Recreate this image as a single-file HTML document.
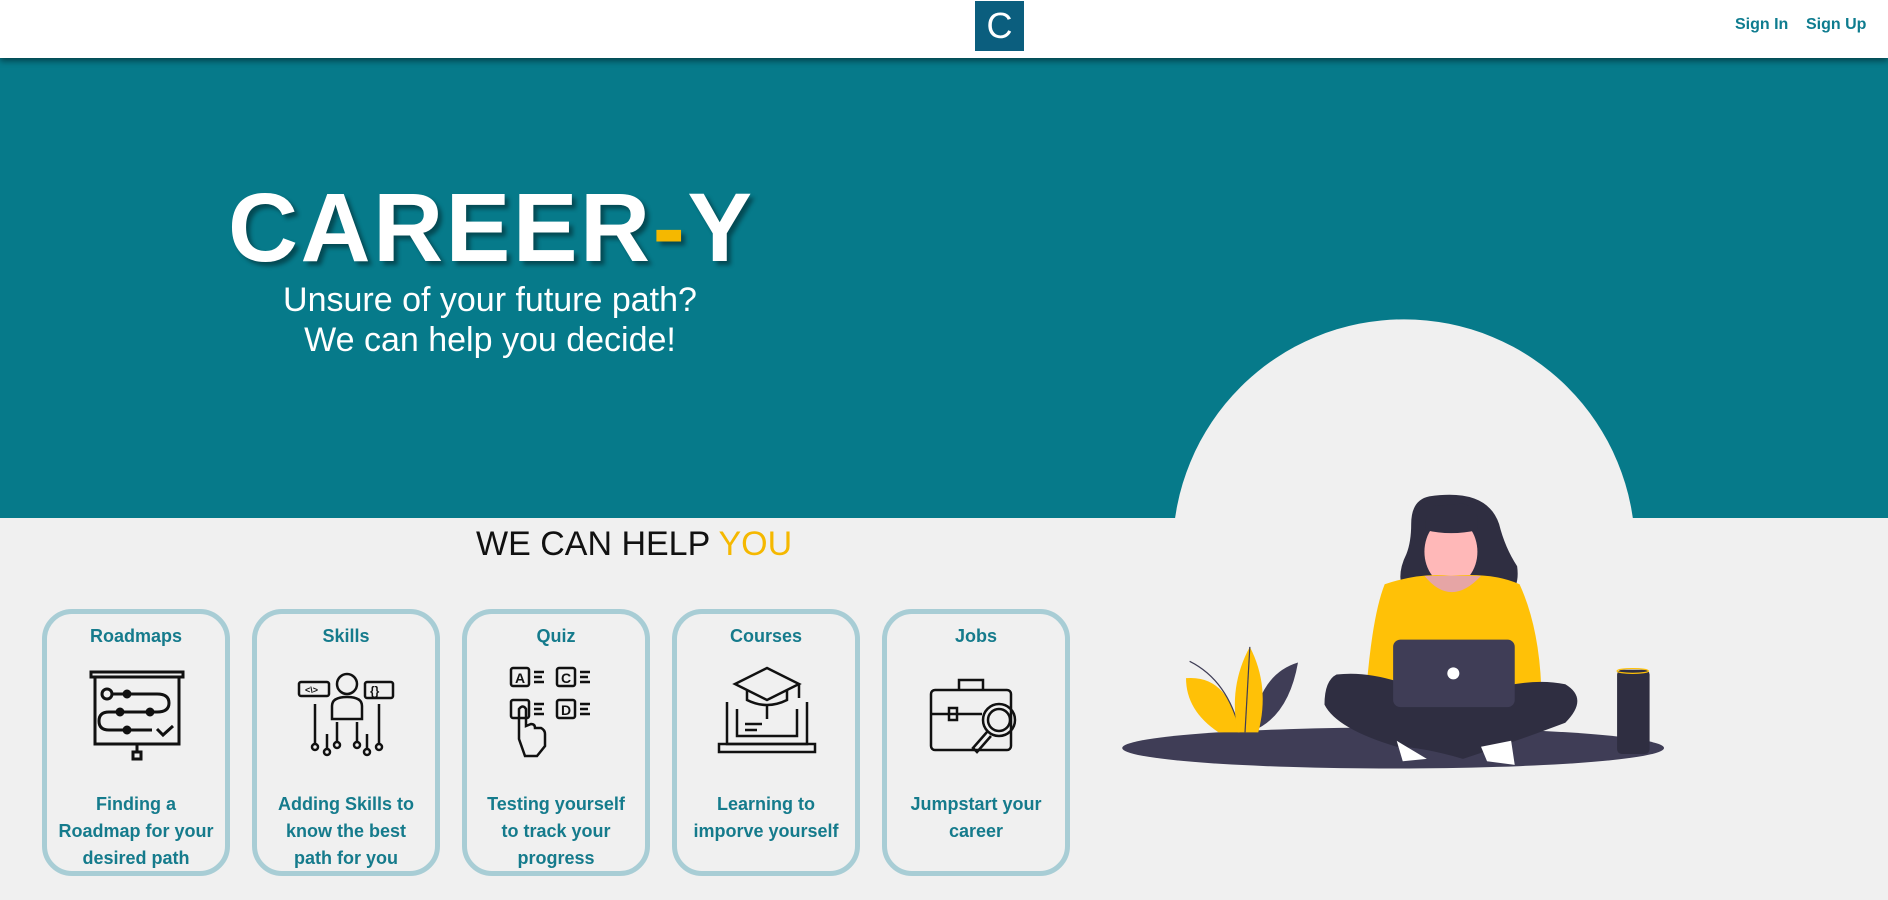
<!DOCTYPE html>
<html><head><meta charset="utf-8"><style>
*{margin:0;padding:0;box-sizing:border-box}
body{width:1888px;height:900px;overflow:hidden;background:#f0f0f0;font-family:"Liberation Sans",Arial,sans-serif;position:relative}
.hdr{position:absolute;left:0;top:0;width:1888px;height:58px;background:#fff;box-shadow:0 3px 6px rgba(0,0,0,.45);z-index:3}
.logo{position:absolute;left:975px;top:1px;width:49px;height:50px;background:#0b5e7e;color:#fff;font-size:36px;text-align:center;line-height:50px;font-weight:normal}
.nav{position:absolute;top:16px;font-size:16px;font-weight:bold;color:#0e7c8f}
.hero{position:absolute;left:0;top:58px;width:1888px;height:460px;background:#067a8a}
.title{position:absolute;left:228px;top:172px;font-size:97px;font-weight:bold;color:#fff;letter-spacing:2.5px;text-shadow:4px 4px 4px rgba(0,0,0,.4);z-index:2}
.sub{position:absolute;left:240px;width:500px;top:280px;text-align:center;color:#fff;font-size:34px;line-height:40px;z-index:2}
.help{position:absolute;left:476px;top:525px;font-size:34px;color:#111;z-index:2}
.card{position:absolute;top:609px;width:188px;height:267px;border:5px solid #a8cdd5;border-radius:30px;text-align:center;color:#157b8c;font-weight:bold;z-index:2}
.card .t{margin-top:12px;font-size:18px}
.card svg{position:absolute;left:40px;top:50px}
.card .d{position:absolute;left:0;right:0;top:177px;font-size:18px;line-height:27px}
</style></head><body>
<div class="hdr"><div class="logo">C</div><div class="nav" style="left:1735px">Sign In</div><div class="nav" style="left:1806px">Sign Up</div></div>
<div class="hero"></div>
<div class="title">CAREER<span style="color:#f5b800">-</span>Y</div>
<div class="sub">Unsure of your future path?<br>We can help you decide!</div>
<div class="help">WE CAN HELP <span style="color:#f5b800">YOU</span></div>

<svg style="position:absolute;left:0;top:0;z-index:1" width="1888" height="900" viewBox="0 0 1568 747">
<circle cx="1166" cy="457" r="192" fill="#f0f0f0"/>
<ellipse cx="1157" cy="621" rx="225" ry="17" fill="#3f3d56"/>
<path d="M985 563 Q1020 560 1030 608 L1012 608 Q985 590 985 563Z" fill="#ffc107"/>
<path d="M988 549 Q1020 565 1030 608" stroke="#3f3d56" fill="none"/>
<path d="M1078 550 Q1045 560 1040 607 Q1070 595 1078 550Z" fill="#3f3d56"/>
<path d="M1038 537 Q1055 570 1045 608 L1028 608 Q1020 570 1038 537Z" fill="#ffc107"/>
<line x1="1038" y1="537" x2="1034" y2="608" stroke="#3f3d56"/>
<path d="M1187 412 Q1235 405 1245 435 Q1250 455 1260 470 Q1262 485 1255 492 L1168 495 Q1158 480 1168 460 Q1172 450 1172 435 Q1172 415 1187 412Z" fill="#2f2e41"/>
<ellipse cx="1205" cy="458" rx="22" ry="28" fill="#ffb8b8"/>
<path d="M1184 440 Q1205 445 1227 440 Q1230 422 1215 418 L1190 420 Q1182 428 1184 440Z" fill="#2f2e41"/>
<path d="M1150 485 Q1180 475 1205 478 Q1240 475 1262 485 Q1278 520 1280 570 L1260 572 L1250 560 L1160 560 L1150 575 L1135 570 Q1140 510 1150 485Z" fill="#ffc107"/>
<path d="M1183 478 Q1205 505 1230 478Z" fill="#e6a5a5"/>
<path d="M1110 560 Q1150 555 1205 585 Q1260 560 1300 568 Q1320 580 1300 600 Q1260 615 1230 625 L1215 630 Q1180 620 1160 620 Q1110 605 1100 585 Q1100 565 1110 560Z" fill="#2f2e41"/>
<path d="M1160 615 L1165 632 L1185 630 Z" fill="#fff"/><path d="M1230 620 L1255 615 L1258 635 L1235 632Z" fill="#fff"/>
<rect x="1157" y="531" width="101" height="56" rx="6" fill="#3f3d56"/>
<circle cx="1207" cy="559" r="5" fill="#fff"/>
<rect x="1343" y="556" width="27" height="70" rx="4" fill="#2f2e41"/>
<ellipse cx="1356" cy="557" rx="13" ry="2" fill="none" stroke="#ffc107"/>
</svg>

<div class="card" style="left:42px"><div class="t">Roadmaps</div>
<svg width="100" height="100" viewBox="0 0 100 100" fill="none" stroke="#111" stroke-width="3"><rect x="4" y="8" width="92" height="5"/><path d="M8 13V80H92V13M50 80V88"/><rect x="46" y="88" width="8" height="7"/><circle cx="20" cy="30" r="5"/><path d="M25 30H70Q82 30 82 39Q82 48 70 48H22Q12 48 12 57Q12 66 22 66H65"/><circle cx="40" cy="30" r="3"/><circle cx="33" cy="48" r="3"/><circle cx="63" cy="48" r="3"/><circle cx="40" cy="66" r="3"/><path d="M70 65L76 71L86 62"/></svg>
<div class="d">Finding a<br>Roadmap for your<br>desired path</div></div>

<div class="card" style="left:252px"><div class="t">Skills</div>
<svg width="100" height="100" viewBox="0 0 100 100" fill="none" stroke="#111" stroke-width="2.5"><rect x="2" y="18" width="30" height="14" rx="2"/><rect x="68" y="18" width="28" height="16" rx="2"/><circle cx="50" cy="20" r="10"/><path d="M35 55V42Q35 33 50 33Q65 33 65 42V55Z"/><path d="M18 40V80M82 40V80M40 58V78M60 58V78M30 70V85M70 70V85"/><circle cx="18" cy="83" r="3"/><circle cx="30" cy="88" r="3"/><circle cx="40" cy="81" r="3"/><circle cx="60" cy="81" r="3"/><circle cx="70" cy="88" r="3"/><circle cx="82" cy="83" r="3"/><text x="8" y="29" font-size="9" fill="#111" stroke="none">&lt;\&gt;</text><text x="73" y="31" font-size="12" fill="#111" stroke="none">{}</text></svg>
<div class="d">Adding Skills to<br>know the best<br>path for you</div></div>

<div class="card" style="left:462px"><div class="t">Quiz</div>
<svg width="100" height="100" viewBox="0 0 100 100" fill="none" stroke="#111" stroke-width="2.5"><rect x="4" y="4" width="18" height="18" rx="2"/><rect x="50" y="4" width="18" height="18" rx="2"/><rect x="4" y="36" width="18" height="18" rx="2"/><rect x="50" y="36" width="18" height="18" rx="2"/><path d="M27 8H37M27 13H35M27 18H37M73 8H83M73 13H81M73 18H83M27 40H37M27 45H35M27 50H37M73 40H83M73 45H81M73 50H83"/><text x="8" y="19" font-size="14" fill="#111" stroke="none">A</text><text x="54" y="19" font-size="14" fill="#111" stroke="none">C</text><text x="54" y="51" font-size="14" fill="#111" stroke="none">D</text><path d="M12 75V45Q16 40 19 45V62L24 60Q28 60 28 64L34 64Q38 66 38 70V82L30 92H18Z"/></svg>
<div class="d">Testing yourself<br>to track your<br>progress</div></div>

<div class="card" style="left:672px"><div class="t">Courses</div>
<svg width="100" height="100" viewBox="0 0 100 100" fill="none" stroke="#111" stroke-width="2.5"><path d="M10 38V80H90V38"/><path d="M2 80H98V88H2Z"/><path d="M20 45V72H80V45"/><path d="M50 4L82 20L50 36L18 20Z"/><path d="M30 26V36Q50 46 70 36V26"/><path d="M82 20V34"/><path d="M50 40V55"/><path d="M28 60H45M28 66H40"/></svg>
<div class="d">Learning to<br>imporve yourself</div></div>

<div class="card" style="left:882px"><div class="t">Jobs</div>
<svg width="100" height="100" viewBox="0 0 100 100" fill="none" stroke="#111" stroke-width="2.5"><rect x="4" y="26" width="80" height="60" rx="4"/><path d="M32 26V16H56V26M4 50H55"/><rect x="22" y="44" width="8" height="12"/><circle cx="72" cy="56" r="16"/><circle cx="72" cy="56" r="11"/><path d="M60 68L46 84L50 88L64 72"/></svg>
<div class="d">Jumpstart your<br>career</div></div>
</body></html>
